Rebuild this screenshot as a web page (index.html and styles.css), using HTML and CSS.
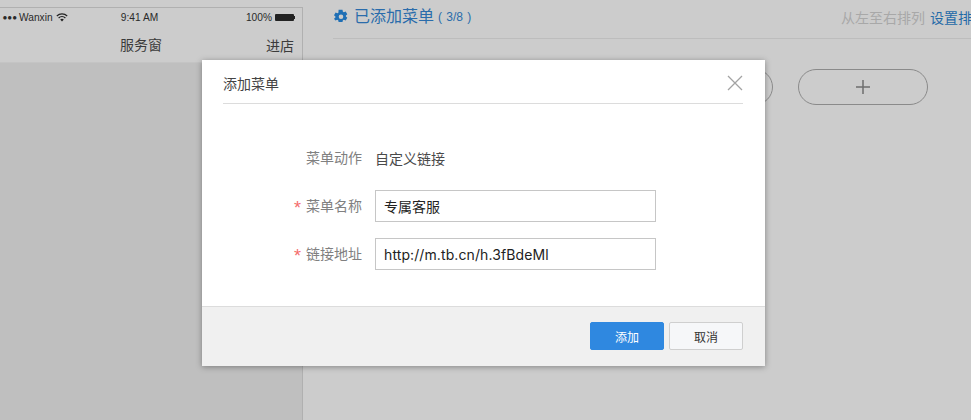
FILE: index.html
```html
<!DOCTYPE html>
<html lang="zh">
<head>
<meta charset="utf-8">
<title>添加菜单</title>
<link rel="stylesheet" href="styles.css">
</head>
<body>
<div class="page">
  <section class="phone">
    <div class="status">
      <div class="status-left"><span class="dots">●●●</span><span>Wanxin</span>
        <svg class="wifi" width="12" height="9" viewBox="0 0 12 9"><path d="M6 8.6 4.2 6.6a2.6 2.6 0 0 1 3.6 0z" fill="#222"/><path d="M2.6 5a4.9 4.9 0 0 1 6.8 0M.8 3a7.6 7.6 0 0 1 10.4 0" fill="none" stroke="#222" stroke-width="1.2"/></svg>
      </div>
      <div class="status-time">9:41 AM</div>
      <div class="status-right"><span>100%</span><span class="battery"></span><span class="battery-tip"></span></div>
    </div>
    <div class="navbar">
      <span class="nav-title">服务窗</span>
      <span class="nav-link">进店</span>
    </div>
    <div class="phone-body"></div>
  </section>
  <section class="editor">
    <header class="editor-head">
      <svg class="gear" width="14" height="15" viewBox="0 0 14 15"><path fill="#1f6fb5" fill-rule="evenodd" d="M4.600.8h3.900l.4 1.900 1 .5 1.800-.7 1.600 2.700-1.400 1.200v1.100l1.400 1.200-1.600 2.700-1.800-.7-1 .5-.4 1.900H4.600l-.4-1.900-1-.5-1.800.7L0 9.700l1.400-1.200V7.400L0 6.200l1.600-2.700 1.800.7 1-.5zM7 5.400a2.300 2.300 0 1 0 0 4.600 2.300 2.300 0 0 0 0-4.600z"/></svg>
      <h2 class="editor-title">已添加菜单</h2>
      <span class="editor-count">( 3/8 )</span>
      <div class="editor-order"><span class="order-text">从左至右排列</span><a class="order-link">设置排序</a></div>
    </header>
    <div class="pills">
      <div class="pill"></div>
      <div class="pill pill-add">
        <svg width="14" height="14" viewBox="0 0 14 14"><path d="M7 0v14M0 7h14" stroke="#6e6e6e" stroke-width="1.500"/></svg>
      </div>
    </div>
  </section>
</div>

<div class="modal">
  <div class="modal-head">
    <span class="modal-title">添加菜单</span>
    <svg class="modal-close" width="16" height="16" viewBox="0 0 16 16"><path d="M1 1l14 14M15 1 1 15" stroke="#a3a3a3" stroke-width="1.300" fill="none"/></svg>
  </div>
  <form class="modal-form">
    <div class="row row-static">
      <label class="row-label">菜单动作</label>
      <span class="row-value">自定义链接</span>
    </div>
    <div class="row row-name">
      <label class="row-label"><i class="req">*</i>菜单名称</label>
      <input class="field" type="text" value="专属客服">
    </div>
    <div class="row">
      <label class="row-label"><i class="req">*</i>链接地址</label>
      <input class="field field-url" type="text" value="http://m.tb.cn/h.3fBdeMl">
    </div>
  </form>
  <footer class="modal-foot">
    <button class="btn btn-primary" type="button">添加</button>
    <button class="btn btn-default" type="button">取消</button>
  </footer>
</div>
</body>
</html>
```
FILE: styles.css
```css
* { box-sizing: border-box; }
html, body { margin: 0; padding: 0; height: 100%; overflow: hidden; }
body {
  background: #cccccc;
  font-family: "Liberation Sans", "Noto Sans CJK SC", sans-serif;
  color: #333;
}
.page { display: flex; width: 971px; height: 420px; overflow: hidden; position: relative; }

.phone {
  width: 303px;
  flex: none;
  margin-top: 7px;
  border-top: 1px solid #b0b0b0;
  border-right: 1px solid #b0b0b0;
  display: flex;
  flex-direction: column;
}
.status {
  display: grid;
  grid-template-columns: 1fr auto 1fr;
  align-items: center;
  height: 18px;
  font-size: 10.200px;
  color: #2a2a2a;
  padding: 0 7px 0 0;
}
.status-left { display: flex; align-items: center; gap: 2px; }
.dots { font-size: 8px; width: 17px; overflow: hidden; white-space: nowrap; direction: rtl; }
.wifi { margin-left: 1px; }
.status-time { margin-left: -16px; }
.status-right { display: flex; align-items: center; justify-content: flex-end; gap: 2px; }
.status-right span:first-child { margin-right: 1px; }
.battery { width: 19px; height: 7px; background: #222; border-radius: 1px; }
.battery-tip { width: 1px; height: 3px; background: #222; margin-left: -2px; }
.navbar {
  height: 36px;
  display: flex;
  align-items: center;
  justify-content: center;
  position: relative;
  font-size: 14px;
  color: #3b3b3b;
  padding-bottom: 1px;
}
.nav-title { margin-left: -20px; }
.nav-link { position: absolute; right: 8px; top: 9px; }
.phone-body { flex: 1; background: #bfbfbf; border-top: 1px solid #c4c4c4; }

.editor { flex: 1; min-width: 0; padding-left: 30px; overflow: hidden; }
.editor-head {
  height: 39px;
  border-bottom: 1px solid #bdbdbd;
  display: flex;
  align-items: center;
  padding: 0 0 5px 1px;
  white-space: nowrap;
}
.gear { flex: none; }
.editor-title { margin: 0 0 0 6px; font-size: 16px; line-height: 22px; font-weight: 400; color: #2a6cab; }
.editor-count { margin-left: 4px; font-size: 12px; word-spacing: 1px; color: #2a6cab; }
.editor-order { margin-left: auto; font-size: 14px; flex: none; margin-right: -15px; }
.order-text { color: #a8a8a8; }
.order-link { color: #1f6aa8; margin-left: 5px; }
.pills { display: flex; gap: 25px; margin: 30px 0 0 310px; }
.pill {
  width: 130px;
  height: 36px;
  flex: none;
  border: 1px solid #8a8a8a;
  border-radius: 18px;
}
.pill-add { display: flex; align-items: center; justify-content: center; }

.modal {
  position: absolute;
  left: 202px;
  top: 60px;
  width: 563px;
  height: 306px;
  background: #fff;
  box-shadow: 0 1px 6px rgba(0, 0, 0, 0.35);
  display: flex;
  flex-direction: column;
}
.modal-head {
  margin: 0 22px 0 21px;
  height: 44px;
  padding-top: 3px;
  border-bottom: 1px solid #dcdcdc;
  display: flex;
  align-items: center;
  justify-content: space-between;
}
.modal-title { font-size: 14px; color: #444; }
.modal-form { flex: 1; padding-top: 39px; }
.row { display: flex; align-items: center; height: 32px; }
.row-static { height: 30px; }
.row-name { margin-top: 17px; margin-bottom: 16px; }
.row-label {
  width: 160px;
  text-align: right;
  font-size: 14px;
  color: #808080;
  flex: none;
  margin-right: 13px;
  margin-bottom: 2px;
}
.req {
  font-style: normal;
  color: #f46c6c;
  margin-right: 5px;
  font-size: 18px;
  line-height: 0;
  vertical-align: -3px;
}
.row-value { font-size: 14px; color: #4a4a4a; }
.field {
  width: 281px;
  height: 32px;
  border: 1px solid #c6c6c6;
  padding: 0 8px;
  font: 14px "Liberation Sans", "Noto Sans CJK SC", sans-serif;
  color: #222;
  background: #fff;
  border-radius: 0;
  outline: none;
}
.field-url { font-family: "Inter", "Liberation Sans", sans-serif; letter-spacing: 0.1px; }
.modal-foot {
  height: 60px;
  flex: none;
  background: #f0f0f0;
  border-top: 1px solid #dcdcdc;
  display: flex;
  justify-content: flex-end;
  align-items: flex-start;
  gap: 5px;
  padding: 15px 22px 0 0;
}
.btn {
  width: 74px;
  height: 28px;
  font: 12px "Liberation Sans", "Noto Sans CJK SC", sans-serif;
  border-radius: 2px;
  padding: 0;
}
.btn-primary { background: #2f88e0; border: 1px solid #2f88e0; color: #fff; }
.btn-default { background: #f6f7f9; border: 1px solid #cfcfcf; color: #333; }
```
